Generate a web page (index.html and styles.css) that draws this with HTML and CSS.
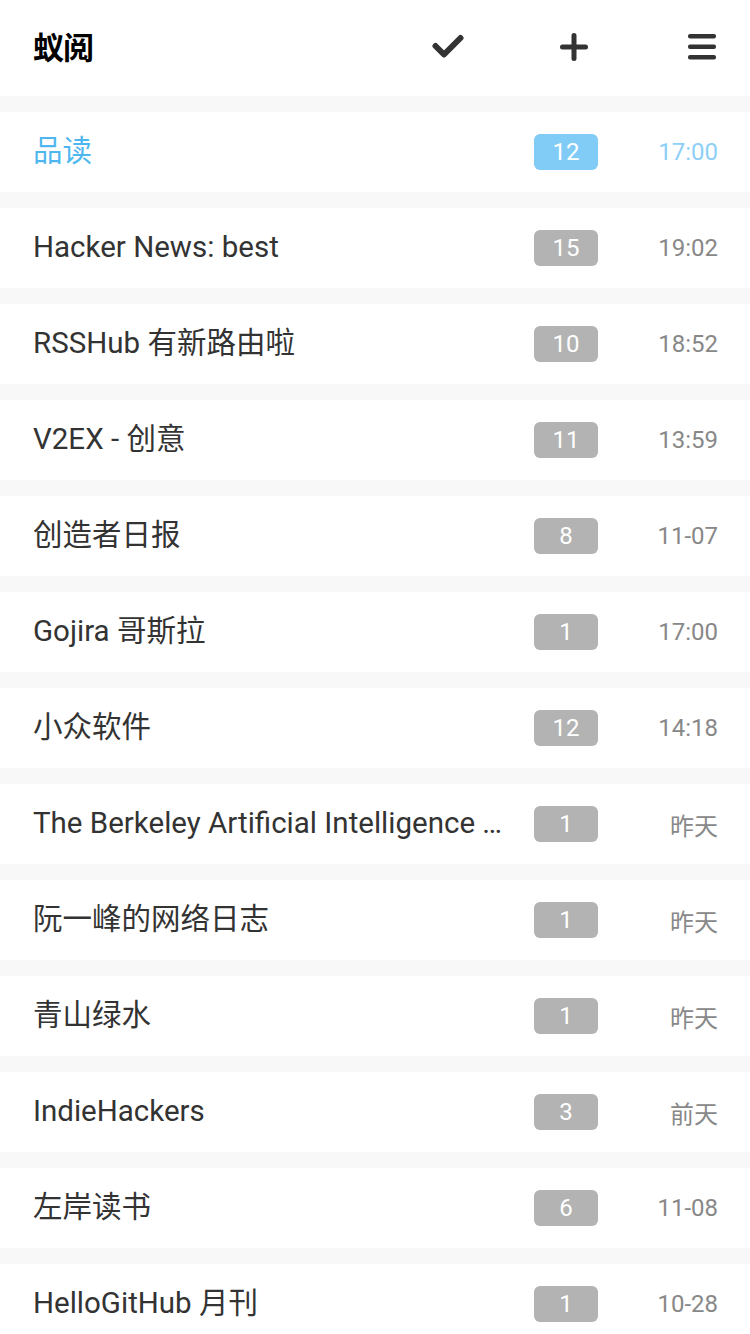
FILE: index.html
```html
<!DOCTYPE html>
<html lang="zh-CN">
<head>
<meta charset="utf-8">
<title>蚁阅</title>
<link rel="stylesheet" href="styles.css">
</head>
<body>
<header class="topbar">
  <h1 class="brand">蚁阅</h1>
  <svg class="icon icon-check" width="32" height="28" viewBox="0 0 32 28"><path d="M3.5 13 L12 21.5 L28.5 5" fill="none" stroke="#333" stroke-width="6" stroke-linecap="round" stroke-linejoin="round"/></svg>
  <svg class="icon icon-plus" width="28" height="28" viewBox="0 0 28 28"><path d="M14 2.5 V25.5 M2.5 14 H25.5" fill="none" stroke="#333" stroke-width="5" stroke-linecap="round"/></svg>
  <svg class="icon icon-menu" width="28" height="28" viewBox="0 0 28 28"><rect x="0" y="1" width="28" height="4.5" rx="2"/><rect x="0" y="11.5" width="28" height="4.5" rx="2"/><rect x="0" y="22" width="28" height="4.5" rx="2"/></svg>
</header>
<main class="feed-list">
  <div class="feed active"><span class="title">品读</span><span class="badge">12</span><span class="time">17:00</span></div>
  <div class="feed"><span class="title">Hacker News: best</span><span class="badge">15</span><span class="time">19:02</span></div>
  <div class="feed"><span class="title">RSSHub 有新路由啦</span><span class="badge">10</span><span class="time">18:52</span></div>
  <div class="feed"><span class="title">V2EX - 创意</span><span class="badge">11</span><span class="time">13:59</span></div>
  <div class="feed"><span class="title">创造者日报</span><span class="badge">8</span><span class="time">11-07</span></div>
  <div class="feed"><span class="title">Gojira 哥斯拉</span><span class="badge">1</span><span class="time">17:00</span></div>
  <div class="feed"><span class="title">小众软件</span><span class="badge">12</span><span class="time">14:18</span></div>
  <div class="feed"><span class="title">The Berkeley Artificial Intelligence Research Blog</span><span class="badge">1</span><span class="time">昨天</span></div>
  <div class="feed"><span class="title">阮一峰的网络日志</span><span class="badge">1</span><span class="time">昨天</span></div>
  <div class="feed"><span class="title">青山绿水</span><span class="badge">1</span><span class="time">昨天</span></div>
  <div class="feed"><span class="title">IndieHackers</span><span class="badge">3</span><span class="time">前天</span></div>
  <div class="feed"><span class="title">左岸读书</span><span class="badge">6</span><span class="time">11-08</span></div>
  <div class="feed"><span class="title">HelloGitHub 月刊</span><span class="badge">1</span><span class="time">10-28</span></div>
</main>
</body>
</html>
```
FILE: styles.css
```css
html, body {
  margin: 0;
  padding: 0;
}
body {
  background: #f8f8f8;
  font-family: Roboto, "Noto Sans CJK SC", sans-serif;
  color: #333;
}
.topbar {
  height: 96px;
  background: #fff;
  display: flex;
  align-items: center;
  padding: 0 34px 0 33px;
  box-sizing: border-box;
}
.brand {
  flex: 1;
  margin: -5px 0 0 0;
  font-size: 31px;
  font-weight: 700;
  color: #000;
  font-family: "Noto Sans CJK SC", sans-serif;
  letter-spacing: -1px;
}
.icon {
  display: block;
  fill: #333;
}
.icon-check { margin-top: -2px; }
.icon-plus { margin-left: 96px; margin-top: -2px; }
.icon-menu { margin-left: 100px; margin-top: -2px; }
.feed-list {
  display: flex;
  flex-direction: column;
  gap: 16px;
  padding-top: 16px;
}
.feed {
  height: 80px;
  background: #fff;
  display: flex;
  align-items: center;
  padding: 0 32px 0 33px;
}
.title {
  flex: 1;
  min-width: 0;
  margin-right: 26px;
  margin-top: -2px;
  font-size: 29.5px;
  line-height: 40px;
  white-space: nowrap;
  overflow: hidden;
  text-overflow: ellipsis;
  color: #333;
}
.badge {
  width: 64px;
  height: 36px;
  border-radius: 6px;
  background: #b3b3b3;
  color: #fff;
  font-size: 24px;
  display: flex;
  align-items: center;
  justify-content: center;
  flex-shrink: 0;
}
.time {
  width: 120px;
  text-align: right;
  font-size: 24px;
  color: #888;
  flex-shrink: 0;
}
.active .title { color: #4fb7f0; }
.active .badge { background: #81cbf7; }
.active .time { color: #8dcff6; }
```
